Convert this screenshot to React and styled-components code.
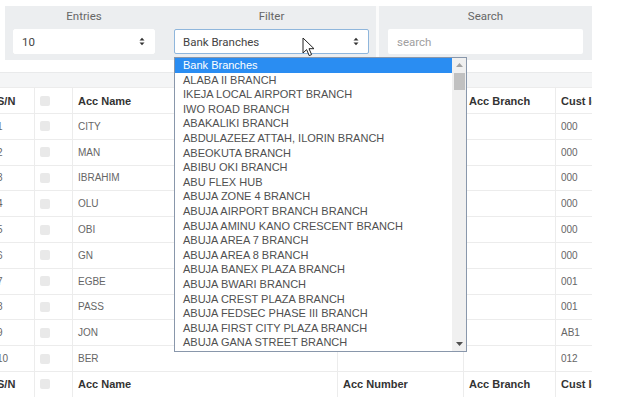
import React from 'react';
import styled, { createGlobalStyle } from 'styled-components';

const branches = [
    'Bank Branches',
    'ALABA II BRANCH',
    'IKEJA LOCAL AIRPORT BRANCH',
    'IWO ROAD BRANCH',
    'ABAKALIKI BRANCH',
    'ABDULAZEEZ ATTAH, ILORIN BRANCH',
    'ABEOKUTA BRANCH',
    'ABIBU OKI BRANCH',
    'ABU FLEX HUB',
    'ABUJA ZONE 4 BRANCH',
    'ABUJA AIRPORT BRANCH BRANCH',
    'ABUJA AMINU KANO CRESCENT BRANCH',
    'ABUJA AREA 7 BRANCH',
    'ABUJA AREA 8 BRANCH',
    'ABUJA BANEX PLAZA BRANCH',
    'ABUJA BWARI BRANCH',
    'ABUJA CREST PLAZA BRANCH',
    'ABUJA FEDSEC PHASE III BRANCH',
    'ABUJA FIRST CITY PLAZA BRANCH',
    'ABUJA GANA STREET BRANCH',
];

const rows = [
    { sn: 1, name: 'CITY', cust: '000' },
    { sn: 2, name: 'MAN', cust: '000' },
    { sn: 3, name: 'IBRAHIM', cust: '000' },
    { sn: 4, name: 'OLU', cust: '000' },
    { sn: 5, name: 'OBI', cust: '000' },
    { sn: 6, name: 'GN', cust: '000' },
    { sn: 7, name: 'EGBE', cust: '001' },
    { sn: 8, name: 'PASS', cust: '001' },
    { sn: 9, name: 'JON', cust: 'AB1' },
    { sn: 10, name: 'BER', cust: '012' },
];

function UpDown() {
    return (
        <svg width="6" height="9" viewBox="0 0 6 9">
            <path d="M0.5 3.5 L3 0.8 L5.5 3.5 Z" fill="#333" />
            <path d="M0.5 5.5 L3 8.2 L5.5 5.5 Z" fill="#333" />
        </svg>
    );
}

function HeaderRow() {
    return (
        <Row $head>
            <Cell $sn><HeadText>S/N</HeadText></Cell>
            <Cell><Check /></Cell>
            <Cell><HeadText>Acc Name</HeadText></Cell>
            <Cell><HeadText>Acc Number</HeadText></Cell>
            <Cell><HeadText>Acc Branch</HeadText></Cell>
            <Cell><HeadText>Cust Id</HeadText></Cell>
        </Row>
    );
}

export default function App() {
    return (
        <Page>
            <GlobalStyle />
            <FilterPanel>
                <FilterCol $shift={7}>
                    <Label>Entries</Label>
                    <SelectBox $w={142}>
                        <span>10</span>
                        <UpDown />
                    </SelectBox>
                </FilterCol>
                <FilterCol $shift={3}>
                    <Label>Filter</Label>
                    <SelectBox $w={195} $focus>
                        <span>Bank Branches</span>
                        <UpDown />
                    </SelectBox>
                </FilterCol>
                <FilterCol $divider>
                    <Label>Search</Label>
                    <SearchInput placeholder="search" readOnly />
                </FilterCol>
            </FilterPanel>

            <Strip />

            <TableWrap>
                <Table>
                    <HeaderRow />
                    {rows.map(r => (
                        <Row key={r.sn}>
                            <Cell $sn><CellText>{r.sn}</CellText></Cell>
                            <Cell><Check /></Cell>
                            <Cell><CellText>{r.name}</CellText></Cell>
                            <Cell />
                            <Cell />
                            <Cell><CellText>{r.cust}</CellText></Cell>
                        </Row>
                    ))}
                    <HeaderRow />
                </Table>
            </TableWrap>

            <Dropdown>
                <OptionList>
                    {branches.map((b, i) => (
                        <Option key={b} $selected={i === 0}>{b}</Option>
                    ))}
                </OptionList>
                <ScrollBar>
                    <ScrollBtn>
                        <svg width="7" height="4" viewBox="0 0 7 4"><path d="M0 4 L3.5 0 L7 4 Z" fill="#a3a3a3" /></svg>
                    </ScrollBtn>
                    <Thumb />
                    <Spacer />
                    <ScrollBtn>
                        <svg width="7" height="4" viewBox="0 0 7 4"><path d="M0 0 L3.5 4 L7 0 Z" fill="#505050" /></svg>
                    </ScrollBtn>
                </ScrollBar>
            </Dropdown>

            <Cursor width="13" height="20" viewBox="0 0 13 20">
                <path d="M1 1 L1 16 L4.6 12.6 L7.2 18.6 L9.6 17.6 L7 11.7 L12 11.7 Z" fill="#fff" stroke="#222" strokeWidth="1" strokeLinejoin="round" />
            </Cursor>
        </Page>
    );
}

const GlobalStyle = createGlobalStyle`
    html, body {
        margin: 0;
        padding: 0;
        background: #fff;
    }
    body {
        font-family: "Liberation Sans", Arial, sans-serif;
    }
`;

const Page = styled.div`
    position: relative;
    width: 621px;
    height: 398px;
    overflow: hidden;
    padding-top: 6px;
    box-sizing: border-box;
`;

const FilterPanel = styled.div`
    margin-left: 5px;
    width: 587px;
    height: 54px;
    display: grid;
    grid-template-columns: 165px 206px 216px;
    background: #eceef0;
`;

const FilterCol = styled.div`
    display: flex;
    flex-direction: column;
    align-items: center;
    padding-top: 3px;
    padding-right: ${p => p.$shift || 0}px;
    gap: 6px;
    border-left: ${p => (p.$divider ? '3px solid #fbfbfb' : 'none')};
`;

const Label = styled.div`
    font-family: Roboto, "Liberation Sans", sans-serif;
    font-size: 11.5px;
    line-height: 14px;
    color: #666;
`;

const SelectBox = styled.div`
    width: ${p => p.$w}px;
    height: 25px;
    box-sizing: border-box;
    background: #fff;
    border: 1px solid ${p => (p.$focus ? '#8fb6dc' : '#fff')};
    border-radius: 2px;
    display: flex;
    align-items: center;
    justify-content: space-between;
    padding: 0 9px 0 8px;
    font-family: Roboto, "Liberation Sans", sans-serif;
    font-size: 11.5px;
    color: #444;
`;

const SearchInput = styled.input`
    width: 195px;
    height: 25px;
    box-sizing: border-box;
    border: none;
    border-radius: 2px;
    outline: none;
    padding: 0 9px;
    font-family: Roboto, "Liberation Sans", sans-serif;
    font-size: 11.5px;
    &::placeholder {
        color: #a0a0a0;
    }
`;

const Strip = styled.div`
    margin-top: 12px;
    width: 592px;
    height: 15px;
    box-sizing: border-box;
    background: #f4f5f6;
    border-top: 1px solid #e9eaeb;
`;

const TableWrap = styled.div`
    width: 592px;
    overflow: hidden;
`;

const Table = styled.div`
    margin-left: -10px;
    width: 660px;
`;

const Row = styled.div`
    display: grid;
    grid-template-columns: 45px 38px 265px 126px 92px 94px;
    height: ${p => (p.$head ? '26px' : '25.8px')};
    box-sizing: border-box;
    border-top: 1px solid #ececec;
`;

const Cell = styled.div`
    display: flex;
    align-items: center;
    padding-left: ${p => (p.$sn ? '7px' : '5px')};
    border-right: 1px solid #ececec;
    overflow: hidden;
    white-space: nowrap;
`;

const HeadText = styled.span`
    font-size: 11px;
    font-weight: bold;
    color: #333;
`;

const CellText = styled.span`
    font-size: 10px;
    color: #666;
`;

const Check = styled.span`
    display: block;
    width: 10px;
    height: 10px;
    border-radius: 2px;
    background: #e9e9e9;
`;

const Dropdown = styled.div`
    position: absolute;
    left: 174px;
    top: 57px;
    width: 293px;
    height: 295px;
    box-sizing: border-box;
    border: 1px solid #8997ab;
    background: #fff;
    display: flex;
`;

const OptionList = styled.div`
    flex: 1;
    overflow: hidden;
`;

const Option = styled.div`
    height: 14.6px;
    line-height: 14.6px;
    padding-left: 8px;
    font-size: 11px;
    white-space: nowrap;
    color: ${p => (p.$selected ? '#fff' : '#505050')};
    background: ${p => (p.$selected ? '#2a8df2' : 'transparent')};
`;

const ScrollBar = styled.div`
    width: 14px;
    background: #f0f0f0;
    display: flex;
    flex-direction: column;
    align-items: center;
`;

const ScrollBtn = styled.div`
    height: 14px;
    width: 100%;
    display: flex;
    align-items: center;
    justify-content: center;
`;

const Thumb = styled.div`
    width: 11px;
    height: 17px;
    margin-top: 1px;
    background: #c1c1c1;
`;

const Spacer = styled.div`
    flex: 1;
`;

const Cursor = styled.svg`
    position: absolute;
    left: 302px;
    top: 37px;
`;
